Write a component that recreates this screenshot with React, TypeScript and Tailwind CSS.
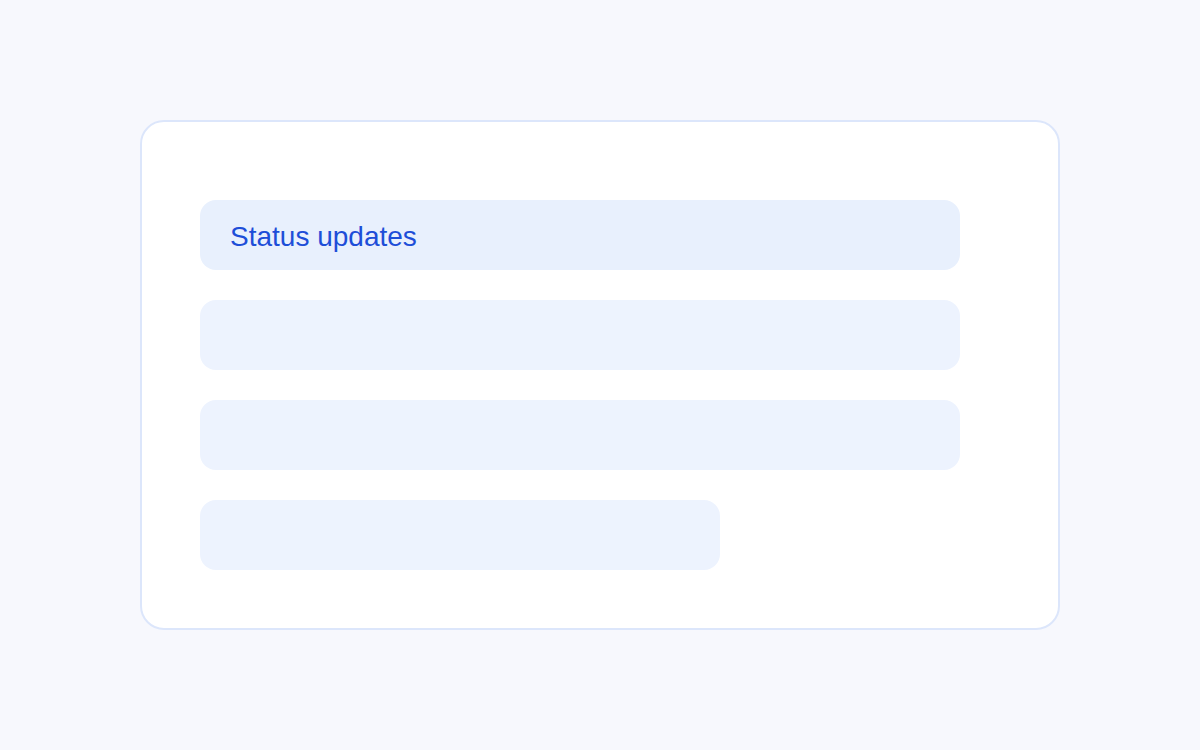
export default function App() {
    return (
        <div className="min-h-screen w-full bg-[#f7f8fd] flex items-center justify-center font-['Liberation_Sans',Arial,sans-serif]">
            <div className="w-[920px] h-[510px] bg-white border-2 border-[#dce6fb] rounded-[24px] px-[58px] pt-[78px] pb-[58px] flex flex-col gap-[30px]">
                <div className="w-[760px] h-[70px] rounded-[16px] bg-[#e8f0fd] flex items-center px-[30px] pt-[3px]">
                    <span className="text-[28px] text-[#1d4ed8] leading-none">Status updates</span>
                </div>
                <div className="w-[760px] h-[70px] rounded-[16px] bg-[#edf3fe]" />
                <div className="w-[760px] h-[70px] rounded-[16px] bg-[#edf3fe]" />
                <div className="w-[520px] h-[70px] rounded-[16px] bg-[#edf3fe]" />
            </div>
        </div>
    );
}
